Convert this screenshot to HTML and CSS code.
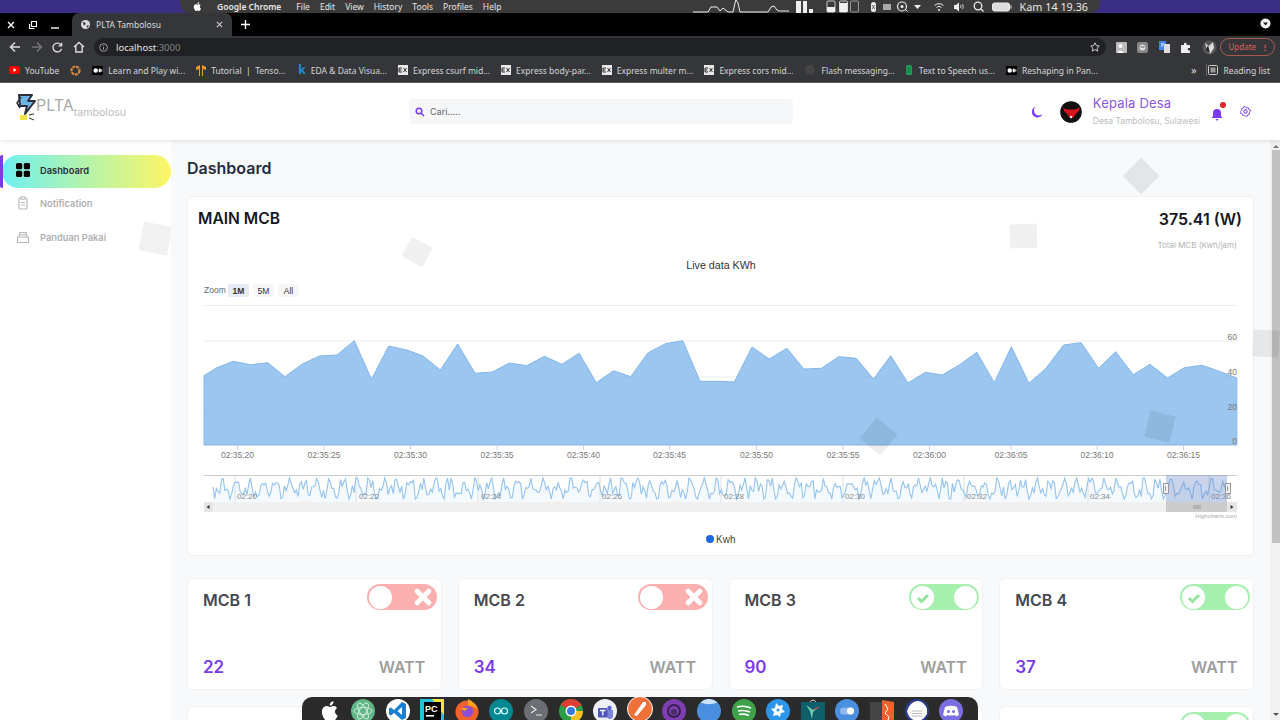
FILE: index.html
```html
<!DOCTYPE html>
<html lang="en">
<head>
    <meta charset="UTF-8">
    <title>PLTA Tambolosu</title>
    <link rel="stylesheet" href="styles.css">
</head>
<body>
    <svg class="defs" width="0" height="0">
        <symbol id="apple" viewBox="0 0 24 24"><path d="M17 12.5c0-2.4 2-3.5 2.1-3.6-1.1-1.7-2.9-1.9-3.5-1.9-1.5-.2-2.9.9-3.7.9-.8 0-2-.9-3.2-.8-1.6 0-3.2 1-4 2.4-1.7 3-.4 7.4 1.2 9.8.8 1.2 1.8 2.5 3.1 2.4 1.2 0 1.7-.8 3.2-.8s1.9.8 3.2.8c1.3 0 2.2-1.2 3-2.4.9-1.4 1.3-2.7 1.3-2.8-.1 0-2.6-1-2.7-4zM14.6 5.2c.7-.8 1.1-1.9 1-3-1 0-2.1.6-2.8 1.4-.6.7-1.2 1.9-1 2.9 1.1.1 2.1-.5 2.8-1.3z"/></symbol>
        <symbol id="ex" viewBox="0 0 10 10"><rect width="10" height="10" fill="#e8e8e8"/><path d="M1 3h3M1 5h2.500M1 7h3M1 3v4M5.500 3l3 4M8.500 3l-3 4" stroke="#333" stroke-width="1" fill="none"/></symbol>
        <symbol id="medium" viewBox="0 0 12 10"><rect width="12" height="10" fill="#000"/><circle cx="4" cy="5" r="2.500" fill="#fff"/><ellipse cx="8.500" cy="5" rx="1.300" ry="2.300" fill="#fff"/><ellipse cx="10.800" cy="5" rx=".5" ry="2" fill="#fff"/></symbol>
        <symbol id="cross" viewBox="0 0 17 17"><path d="M3 3l11 11M14 3L3 14" stroke="#fff" stroke-width="4.600" stroke-linecap="round"/></symbol>
        <symbol id="tick" viewBox="0 0 14 14"><path d="M2 7l3.500 3.500L12 4" fill="none" stroke="#93e59e" stroke-width="3"/></symbol>
    </svg>

    <!-- mac menu bar -->
    <div class="menubar">
        <div class="menubar-panel">
            <svg class="menu-apple" width="11" height="11"><use href="#apple" fill="#fff"/></svg>
            <b class="menu-app">Google Chrome</b>
            <span>File</span><span>Edit</span><span>View</span><span>History</span><span>Tools</span><span>Profiles</span><span>Help</span>
            <svg class="menu-status" width="320" height="13" viewBox="693 0 320 13">
                <polyline points="693,12 708,12 711,7 717,7 720,11 723,8 728,12 733,12 735,3 736,0 738,3 740,12 768,12 771,7 774,6 777,10 779,11 789,11" fill="none" stroke="#eee" stroke-width="1"/>
                <rect x="796" y="1" width="5" height="12" fill="#eee"/><rect x="803" y="1" width="4" height="12" fill="#eee"/><rect x="809" y="9" width="4" height="4" fill="#eee"/>
                <rect x="827" y="1" width="8" height="11" fill="none" stroke="#ccc" rx="1"/><rect x="827" y="7" width="8" height="5" fill="#eee"/>
                <rect x="839.500" y="1" width="8" height="11" fill="none" stroke="#ccc" rx="1"/><rect x="839.500" y="3" width="8" height="9" fill="#eee"/>
                <rect x="850.500" y="1" width="8" height="11" fill="none" stroke="#999" rx="1"/>
                <rect x="871" y="2" width="5" height="10" rx="2.500" fill="#eee"/><path d="M872 5l3 4M875 5l-3 4" stroke="#333" stroke-width=".7"/>
                <rect x="883" y="4" width="8" height="6" fill="#aaa"/>
                <circle cx="902" cy="6.500" r="4.500" fill="none" stroke="#eee" stroke-width="1.200"/><circle cx="902" cy="6.500" r="1.500" fill="#eee"/><path d="M905 9l2.500 2.500" stroke="#eee"/>
                <path d="M914 5h7l-3.500 4z" fill="#eee"/>
                <path d="M934.500 5.500a6.500 6.500 0 0 1 9 0M936.500 7.500a3.500 3.500 0 0 1 5 0" fill="none" stroke="#eee"/><circle cx="939" cy="10" r="1" fill="#eee"/>
                <path d="M954 5h2l3-2.500v9l-3-2.500h-2z" fill="#eee"/><path d="M960.500 5q1 1.500 0 3M962.500 4q1.500 2.500 0 5" stroke="#eee" fill="none" stroke-width=".8"/>
                <circle cx="978" cy="6" r="3.800" fill="none" stroke="#eee" stroke-width="1.300"/><path d="M981 9l2.500 2.500" stroke="#eee" stroke-width="1.300"/>
                <rect x="992.500" y="3" width="17" height="8" rx="2" fill="#ddd" stroke="#eee"/><rect x="1010.500" y="5.500" width="1" height="3" fill="#eee"/>
            </svg>
            <span class="menu-clock">Kam 14 19.36</span>
        </div>
    </div>

    <!-- browser chrome -->
    <div class="tabbar">
        <div class="win-btns">
            <svg width="8" height="8" viewBox="0 0 8 8"><path d="M1 1l6 6M7 1l-6 6" stroke="#fff" stroke-width="1.400"/></svg>
            <svg width="8" height="8" viewBox="0 0 8 8"><path d="M2.500.5h5v5h-5zM.5 3v4.500h5" fill="none" stroke="#fff" stroke-width="1.200"/></svg>
            <svg width="8" height="8" viewBox="0 0 8 8"><path d="M0 7h8" stroke="#fff" stroke-width="1.400"/></svg>
        </div>
        <div class="tab">
            <svg width="9" height="9" viewBox="0 0 10 10"><circle cx="5" cy="5" r="5" fill="#ddd"/><path d="M2 2l3 1v2l-2 1zM6 6h3l-2 3z" fill="#35363a"/></svg>
            <span class="tab-title">PLTA Tambolosu</span>
            <svg width="7" height="7" viewBox="0 0 8 8"><path d="M1 1l6 6M7 1l-6 6" stroke="#ccc" stroke-width="1.300"/></svg>
        </div>
        <svg class="new-tab" width="9" height="9" viewBox="0 0 9 9"><path d="M4.500 0v9M0 4.500h9" stroke="#fff" stroke-width="1.400"/></svg>
        <svg class="tab-menu" width="11" height="11" viewBox="0 0 11 11"><circle cx="5.500" cy="5.500" r="5" fill="#f2f2f2"/><path d="M3 4.500h5l-2.500 3z" fill="#111"/></svg>
    </div>

    <div class="toolbar">
        <svg width="12" height="12" viewBox="0 0 12 12"><path d="M11 6H2M6 1.500L1.500 6 6 10.500" fill="none" stroke="#ddd" stroke-width="1.500"/></svg>
        <svg width="12" height="12" viewBox="0 0 12 12"><path d="M1 6h9M6 1.500L10.500 6 6 10.500" fill="none" stroke="#777" stroke-width="1.500"/></svg>
        <svg width="11" height="11" viewBox="0 0 12 12"><path d="M10.500 7.500a4.800 4.800 0 1 1-.8-4.500M10.500.8v3.400H7" fill="none" stroke="#ddd" stroke-width="1.500"/></svg>
        <svg width="12" height="12" viewBox="0 0 12 12"><path d="M1 6l5-4.500L11 6M2.800 5v6h6.400V5" fill="none" stroke="#ddd" stroke-width="1.400"/></svg>
        <div class="omnibox">
            <svg width="9" height="9" viewBox="0 0 10 10"><circle cx="5" cy="5" r="4.300" fill="none" stroke="#aaa"/><path d="M5 4.500v3M5 2.500v1" stroke="#aaa"/></svg>
            <span class="url">localhost<i>:3000</i></span>
            <svg class="star" width="10" height="10" viewBox="0 0 10 10"><path d="M5 .8l1.300 2.800 3 .4-2.200 2.100.6 3L5 7.600 2.300 9.100l.6-3L.7 4l3-.4z" fill="none" stroke="#ddd" stroke-width=".9"/></svg>
        </div>
        <div class="ext-icons">
            <svg width="11" height="11" viewBox="0 0 11 11"><rect width="11" height="11" rx="1" fill="#bbb"/><circle cx="4.500" cy="4" r="2" fill="#fff"/><path d="M1 11q3-5 7 0z" fill="#fff"/></svg>
            <svg width="11" height="11" viewBox="0 0 11 11"><rect width="11" height="11" rx="2" fill="#888"/><circle cx="5.500" cy="5.500" r="3" fill="#ddd"/><path d="M3.500 5h4" stroke="#666"/></svg>
            <svg width="11" height="12" viewBox="0 0 11 12"><rect width="7" height="9" fill="#4285f4"/><rect x="5" y="3" width="6" height="9" fill="#ddd"/><path d="M2 3h3M2 5h2" stroke="#fff"/></svg>
            <svg width="11" height="11" viewBox="0 0 11 11"><path d="M1 3h3V2a1.300 1.300 0 0 1 2.600 0v1H10v3H9a1.300 1.300 0 0 0 0 2.600h1V11H1z" fill="#eee"/></svg>
            <svg width="15" height="15" viewBox="0 0 15 15"><circle cx="7.500" cy="7.500" r="7" fill="#555"/><path d="M3 3l4 3 4-4 1 6-4 6-3-4z" fill="#ddd"/><path d="M6 5l2 8-4-3z" fill="#222"/></svg>
        </div>
        <div class="update-btn">Update <i>⋮</i></div>
    </div>

    <div class="bookmarks">
        <span class="bm"><svg width="11" height="8" viewBox="0 0 11 8"><rect width="11" height="8" rx="2" fill="#f00"/><path d="M4.500 2l3 2-3 2z" fill="#fff"/></svg>YouTube</span>
        <span class="bm"><svg width="11" height="11" viewBox="0 0 11 11"><circle cx="5.500" cy="5.500" r="4" fill="none" stroke="#d98a3a" stroke-width="2.200" stroke-dasharray="3 .8"/></svg></span>
        <span class="bm"><svg width="11" height="9"><use href="#medium"/></svg>Learn and Play wi...</span>
        <span class="bm"><svg width="10" height="11" viewBox="0 0 10 11"><path d="M0 2l4-2v11H3V4L0 5zM10 2L6 0v11h1V4l3 1z" fill="#f59a23"/></svg>Tutorial &nbsp;|&nbsp; Tenso...</span>
        <span class="bm"><b class="k-icon">k</b>EDA &amp; Data Visua...</span>
        <span class="bm"><svg width="10" height="10"><use href="#ex"/></svg>Express csurf mid...</span>
        <span class="bm"><svg width="10" height="10"><use href="#ex"/></svg>Express body-par...</span>
        <span class="bm"><svg width="10" height="10"><use href="#ex"/></svg>Express multer m...</span>
        <span class="bm"><svg width="10" height="10"><use href="#ex"/></svg>Express cors mid...</span>
        <span class="bm bm-wide"><svg width="10" height="10" viewBox="0 0 10 10"><circle cx="5" cy="5" r="5" fill="#444"/></svg>Flash messaging...</span>
        <span class="bm bm-wide"><svg width="6" height="10" viewBox="0 0 6 10"><rect width="6" height="10" rx="1.500" fill="#1e9e5a"/><path d="M1 3h4M1 5h4M1 7h4" stroke="#0c5f34" stroke-width=".6"/></svg>Text to Speech us...</span>
        <span class="bm"><svg width="11" height="9"><use href="#medium"/></svg>Reshaping in Pan...</span>
        <span class="bm-more">»</span>
        <span class="bm-reading"><svg width="10" height="10" viewBox="0 0 10 10"><rect x=".5" y=".5" width="9" height="9" rx="1" fill="none" stroke="#ccc"/><rect x="2.500" y="2.500" width="5" height="5" fill="#999"/></svg>Reading list</span>
    </div>

    <!-- page -->
    <header class="topbar">
        <div class="brand">
            <svg width="20" height="27" viewBox="0 0 20 27">
                <path d="M3 1h13l-4 6 7 0-10 13 2-8H4z" fill="#6db5e6" stroke="#2b2f38" stroke-width="2" stroke-linejoin="round"/>
                <path d="M5 3l-4 6 3 5" fill="none" stroke="#2b2f38" stroke-width="1.500"/>
                <rect x="4" y="21" width="7" height="5" fill="#f2e63a"/>
                <path d="M13 21l5-1M13 24l5 2" stroke="#333"/>
            </svg>
            <span class="brand-name">PLTA</span><span class="brand-sub">tambolosu</span>
        </div>
        <div class="search">
            <svg width="10" height="10" viewBox="0 0 10 10"><circle cx="4" cy="4" r="2.800" fill="none" stroke="#7c3aed" stroke-width="1.500"/><path d="M6.200 6.200L9 9" stroke="#7c3aed" stroke-width="1.500"/></svg>
            <span>Cari.....</span>
        </div>
        <div class="user">
            <svg class="moon" width="12" height="12" viewBox="0 0 12 12"><path d="M4.500.8a5.500 5.500 0 1 0 7 7.200A5 5 0 0 1 4.500.8z" fill="#7c3aed"/></svg>
            <svg class="avatar" width="22" height="22" viewBox="0 0 22 22"><circle cx="11" cy="11" r="10.800" fill="#111"/><path d="M2.500 5.500Q4 8.500 8 8.500h6q4 0 5.500-3 .5 5-3.500 7l-2 3.500-2.500 1.500-2.500-1.500-2-3.500q-4-2-3.500-7z" fill="#d8151f"/><circle cx="11" cy="16" r="1.200" fill="#eee"/></svg>
            <div class="user-info">
                <div class="user-name">Kepala Desa</div>
                <div class="user-place">Desa Tambolosu, Sulawesi</div>
            </div>
            <span class="bell">
                <svg width="12" height="13" viewBox="0 0 12 13"><path d="M6 1a4 4 0 0 0-4 4v3L.8 10h10.400L10 8V5a4 4 0 0 0-4-4zM4.500 11h3L6 13z" fill="#7c3aed"/></svg>
                <i class="bell-dot"></i>
            </span>
            <svg class="gear" width="11" height="11" viewBox="0 0 12 12"><circle cx="6" cy="6" r="1.800" fill="none" stroke="#7c3aed" stroke-width="1.100"/><path d="M6 .8l1.200 1.400 1.800-.3.600 1.700 1.700.6-.3 1.800L11.200 6 10 7.200l.3 1.800-1.700.6-.6 1.700-1.800-.3L6 11.200 4.800 10l-1.800.3-.6-1.700-1.700-.6.3-1.800L.8 6 2 4.800 1.700 3l1.700-.6L4 .7l1.800.3z" fill="none" stroke="#7c3aed" stroke-width="1"/></svg>
        </div>
    </header>

    <div class="layout">
        <aside class="sidebar">
            <i class="deco deco-side"></i>
            <a class="nav-item active">
                <svg width="14" height="14" viewBox="0 0 14 14"><rect width="6.200" height="6.200" rx="1.500"/><rect x="7.800" width="6.200" height="6.200" rx="1.500"/><rect y="7.800" width="6.200" height="6.200" rx="1.500"/><rect x="7.800" y="7.800" width="6.200" height="6.200" rx="1.500"/></svg>
                Dashboard
            </a>
            <a class="nav-item">
                <svg width="14" height="14" viewBox="0 0 14 14" fill="none" stroke="#b5b5b5" stroke-width="1.100"><rect x="3" y="2" width="8" height="11" rx="1.500"/><rect x="5" y=".8" width="4" height="2.400" rx=".8" fill="#fff"/><path d="M5 6.500h4M5 9h4"/></svg>
                Notification
            </a>
            <a class="nav-item">
                <svg width="14" height="14" viewBox="0 0 14 14" fill="none" stroke="#b5b5b5" stroke-width="1.100"><path d="M1.500 7h11v5.500h-11zM3 7l1-4.500h6L11 7"/><path d="M3.500 4.800h7"/></svg>
                Panduan Pakai
            </a>
        </aside>

        <main class="main">
            <i class="deco deco-1"></i>
            <i class="deco deco-2"></i>
            <i class="deco deco-3"></i>
            <i class="deco deco-4"></i>
            <i class="deco deco-5"></i>
            <i class="deco deco-6"></i>

            <div class="content">
                <h1 class="page-title">Dashboard</h1>

                <section class="chart-card">
                    <div class="chart-head">
                        <h2 class="main-mcb">MAIN MCB</h2>
                        <h2>375.41 (W)</h2>
                    </div>
                    <div class="chart-sub">Total MCB (Kwh/jam)</div>

                    <svg class="chart" width="1065" height="299" viewBox="188 256 1065 299">
                        <text class="c-title" x="721" y="269" text-anchor="middle">Live data KWh</text>

                        <text class="c-zoom" x="204" y="293">Zoom</text>
                        <rect x="228" y="284" width="21" height="13" rx="2" fill="#e6ebf5"/>
                        <text class="c-btn c-btn-on" x="238.500" y="293.500" text-anchor="middle">1M</text>
                        <rect x="253" y="284" width="21" height="13" rx="2" fill="#f7f7f7"/>
                        <text class="c-btn" x="263.500" y="293.500" text-anchor="middle">5M</text>
                        <rect x="278" y="284" width="21" height="13" rx="2" fill="#f7f7f7"/>
                        <text class="c-btn" x="288.500" y="293.500" text-anchor="middle">All</text>

                        <path class="c-grid" d="M204 305.500H1237M204 341H1237M204 377H1237M204 411H1237"/>

                        <polygon class="c-area" points="204,445 204,375.700 216.900,367.700 233,361.300 250.600,364.700 267.800,362.700 285,376.700 302.300,364 319.500,356 337,355 354.300,340.700 371.500,379.300 388.700,346 406.900,350 423.100,356 440.300,370 457.600,344 475.100,373.300 492.300,372 509.600,363 526.800,365.700 544.300,356.300 561.900,364.300 579.100,353.300 596.300,382.700 613.600,370.700 630.800,376.700 648,352.700 665.600,343.700 682.800,340.700 700,381.300 720,381.300 734.300,382 752.100,347 769.300,359 786.800,348.300 803.900,369 821.400,368.300 838.600,356.700 856.100,358.300 873.600,379 890.700,355.700 907.900,383 925.400,372.300 942.100,375 959.300,365 976.800,352.300 994.300,382.700 1011.400,346.700 1028.900,383.300 1046,368.300 1063.600,345 1081.100,342.700 1098.600,368.300 1115.700,351.700 1133.200,374.700 1150,364.300 1167.500,378 1184.300,367.700 1202.100,365.300 1219.300,371.300 1236.800,378 1236.800,445"/>
                        <path class="c-axis" d="M204 445.500H1237M237.500 445v5M324 445v5M410.500 445v5M497 445v5M583.500 445v5M669.500 445v5M756.500 445v5M843 445v5M929.500 445v5M1011 445v5M1097 445v5M1183.500 445v5"/>

                        <g class="c-label" text-anchor="middle">
                            <text x="237.500" y="458">02:35:20</text>
                            <text x="324" y="458">02:35:25</text>
                            <text x="410.500" y="458">02:35:30</text>
                            <text x="497" y="458">02:35:35</text>
                            <text x="583.500" y="458">02:35:40</text>
                            <text x="669.500" y="458">02:35:45</text>
                            <text x="756.500" y="458">02:35:50</text>
                            <text x="843" y="458">02:35:55</text>
                            <text x="929.500" y="458">02:36:00</text>
                            <text x="1011" y="458">02:36:05</text>
                            <text x="1097" y="458">02:36:10</text>
                            <text x="1183.500" y="458">02:36:15</text>
                        </g>
                        <g class="c-label" text-anchor="end">
                            <text x="1237" y="340">60</text>
                            <text x="1237" y="375">40</text>
                            <text x="1237" y="410">20</text>
                            <text x="1237" y="444">0</text>
                        </g>

                        <!-- navigator -->
                        <path class="c-nav-top" d="M204 475.500H1237"/>
                        <polygon id="navArea" fill="#f4f9fe"/>
                        <path class="c-nav-ticks" d="M235 476v26M356 476v26M478 476v26M600 476v26M721 476v26M843 476v26M964 476v26M1088 476v26M1209 476v26"/>
                        <polyline id="navLine" fill="none" stroke="#93c3f0" stroke-width="1.100"/>
                        <g class="c-nav-label">
                            <text x="237" y="499">02:20</text>
                            <text x="359" y="499">02:22</text>
                            <text x="481" y="499">02:24</text>
                            <text x="602" y="499">02:26</text>
                            <text x="724" y="499">02:28</text>
                            <text x="845" y="499">02:30</text>
                            <text x="967" y="499">02:32</text>
                            <text x="1090" y="499">02:34</text>
                            <text x="1211" y="499">02:36</text>
                        </g>
                        <rect x="1166" y="475" width="61" height="27" fill="#6685c2" fill-opacity=".35"/>
                        <rect x="204" y="502" width="1033" height="10" fill="#f0f0f0"/>
                        <rect x="204" y="502" width="9" height="10" fill="#e6e6e6"/>
                        <path d="M209.500 505v4l-3-2z" fill="#333"/>
                        <rect x="1166" y="502" width="61" height="10" fill="#cccccc"/>
                        <path d="M1194 505v4M1196 505v4M1198 505v4M1200 505v4" stroke="#999"/>
                        <rect x="1227" y="502" width="10" height="10" fill="#e6e6e6"/>
                        <path d="M1230.500 505v4l3-2z" fill="#333"/>
                        <g fill="#f2f2f2" stroke="#999">
                            <rect x="1163.500" y="483.500" width="5" height="10"/>
                            <rect x="1225.500" y="483.500" width="5" height="10"/>
                        </g>
                        <path d="M1165.500 486v5M1227.500 486v5" stroke="#999"/>
                        <text class="c-credit" x="1237" y="518" text-anchor="end">Highcharts.com</text>

                        <circle cx="710" cy="539" r="4" fill="#1f66e0"/>
                        <text class="c-legend" x="716" y="542.500">Kwh</text>
                    </svg>
                </section>

                <section class="mcb-grid">
                    <div class="mcb-card">
                        <div class="mcb-top"><h3>MCB 1</h3><span class="toggle off"><i class="knob"></i><svg width="18" height="18"><use href="#cross"/></svg></span></div>
                        <div class="mcb-bottom"><b>22</b><span>WATT</span></div>
                    </div>
                    <div class="mcb-card">
                        <div class="mcb-top"><h3>MCB 2</h3><span class="toggle off"><i class="knob"></i><svg width="18" height="18"><use href="#cross"/></svg></span></div>
                        <div class="mcb-bottom"><b>34</b><span>WATT</span></div>
                    </div>
                    <div class="mcb-card">
                        <div class="mcb-top"><h3>MCB 3</h3><span class="toggle on"><i class="check"><svg width="14" height="14"><use href="#tick"/></svg></i><i class="knob"></i></span></div>
                        <div class="mcb-bottom"><b>90</b><span>WATT</span></div>
                    </div>
                    <div class="mcb-card">
                        <div class="mcb-top"><h3>MCB 4</h3><span class="toggle on"><i class="check"><svg width="14" height="14"><use href="#tick"/></svg></i><i class="knob"></i></span></div>
                        <div class="mcb-bottom"><b>37</b><span>WATT</span></div>
                    </div>
                    <div class="mcb-card"></div>
                    <div class="mcb-card"></div>
                    <div class="mcb-card"></div>
                    <div class="mcb-card">
                        <div class="mcb-top mcb-top-end"><span class="toggle on"><i class="check"><svg width="14" height="14"><use href="#tick"/></svg></i><i class="knob"></i></span></div>
                    </div>
                </section>
            </div>

            <div class="scrollbar">
                <i class="arrow-up"></i>
                <i class="thumb"></i>
                <i class="arrow-down"></i>
            </div>
        </main>
    </div>

    <!-- dock -->
    <div class="dock">
        <svg class="dock-apple" width="24" height="24"><use href="#apple" fill="#fff"/></svg>
        <svg width="24" height="24" viewBox="0 0 24 24"><circle cx="12" cy="12" r="12" fill="#62b587"/><g fill="none" stroke="#d6f0df" stroke-width=".9"><ellipse cx="12" cy="12" rx="9" ry="3.500"/><ellipse cx="12" cy="12" rx="9" ry="3.500" transform="rotate(60 12 12)"/><ellipse cx="12" cy="12" rx="9" ry="3.500" transform="rotate(120 12 12)"/></g></svg>
        <svg width="24" height="24" viewBox="0 0 24 24"><circle cx="12" cy="12" r="12" fill="#fff"/><path d="M16 3l4 2v14l-4 2-8-7-3 2.500-2-1V9.500l2-1L8 11z" fill="#1b7fd1"/><path d="M16 8l-4.500 4 4.500 4z" fill="#fff"/></svg>
        <svg width="24" height="24" viewBox="0 0 24 24"><rect width="24" height="24" fill="#21c4d8"/><path d="M12 0h12v16z" fill="#f5e642"/><rect x="4" y="3" width="17" height="19" fill="#000"/><text class="dock-pc" x="5" y="13">PC</text><rect x="6" y="16" width="8" height="1.600" fill="#fff"/></svg>
        <svg width="24" height="24" viewBox="0 0 24 24"><circle cx="12" cy="13" r="11.500" fill="#f0622d"/><path d="M13 0q7 3 10 11-5-5-10-4z" fill="#f9a21b"/><circle cx="12.500" cy="12.500" r="5.800" fill="#8b4fd8"/><path d="M5 9h8l-3 3z" fill="#f9a21b"/></svg>
        <svg width="24" height="24" viewBox="0 0 24 24"><circle cx="12" cy="12" r="12" fill="#00878f"/><circle cx="8.500" cy="12" r="3" fill="none" stroke="#dff" stroke-width="1.200"/><circle cx="15.500" cy="12" r="3" fill="none" stroke="#dff" stroke-width="1.200"/></svg>
        <svg width="24" height="24" viewBox="0 0 24 24"><circle cx="12" cy="12" r="12" fill="#6b6e72"/><path d="M7 7l5 3.500L7 14M12 16h6" fill="none" stroke="#e5e5e5" stroke-width="1.200"/></svg>
        <svg width="24" height="24" viewBox="0 0 24 24"><circle cx="12" cy="12" r="12" fill="#2d9c48"/><path d="M12 12L1.600 6A12 12 0 0 1 22.400 6z" fill="#dd3f33"/><path d="M12 12h12A12 12 0 0 1 12 24z" fill="#f6c025"/><circle cx="12" cy="12" r="5.500" fill="#fff"/><circle cx="12" cy="12" r="4" fill="#3a78e0"/></svg>
        <svg width="24" height="24" viewBox="0 0 24 24"><circle cx="12" cy="12" r="12" fill="#eef0f8"/><circle cx="16.500" cy="9" r="2.200" fill="#5a62c4"/><path d="M13 11h7v6a3 3 0 0 1-6 0z" fill="#7b83dc"/><rect x="5" y="9" width="9.500" height="9.500" rx="1" fill="#4d55b8"/><path d="M7 11.500h5.500M9.800 11.500v5" stroke="#fff" stroke-width="1.300"/></svg>
        <svg class="dock-big" width="26" height="26" viewBox="0 0 26 26"><circle cx="13" cy="13" r="12.500" fill="#f0703a" stroke="#fff" stroke-width="1"/><path d="M7 19l3 1 9-11 0-3-3 0z" fill="#fff"/></svg>
        <svg width="24" height="24" viewBox="0 0 24 24"><circle cx="12" cy="12" r="12" fill="#7d3fb0"/><circle cx="12" cy="12" r="6" fill="none" stroke="#36204f" stroke-width="2"/><circle cx="12" cy="13" r="3" fill="#4a2a69"/></svg>
        <svg width="24" height="24" viewBox="0 0 24 24"><circle cx="12" cy="12" r="12" fill="#4a8ee0"/><path d="M3.500 3.500a12 12 0 0 1 17 0q-8.500 3.500-17 0z" fill="#c9e3fb"/></svg>
        <svg width="24" height="24" viewBox="0 0 24 24"><circle cx="12" cy="12" r="12" fill="#3fa14a"/><path d="M5 8q7-2 14 1M6 12q6-1.500 12 1M7 15.500q5-1 10 1" fill="none" stroke="#fff" stroke-width="1.600"/></svg>
        <svg width="24" height="24" viewBox="0 0 24 24"><circle cx="12" cy="12" r="12" fill="#2d96e8"/><path d="M10 4l3 3 4-1-1 4 3 3-4 1-1 4-3-2-4 1 1-4-3-3 4-1z" fill="#fff"/><circle cx="12" cy="11" r="1.500" fill="#2d96e8"/></svg>
        <svg width="24" height="26" viewBox="0 0 24 26"><path d="M8 4q4-6 8 0" fill="none" stroke="#ccc"/><rect y="3" width="24" height="23" fill="#0f5f6a"/><path d="M5 6l7 5 6-3-6 5-1 7-2-8z" fill="#6fd0b0"/><path d="M12 11l6-3" stroke="#e04050"/></svg>
        <svg width="24" height="24" viewBox="0 0 24 24"><circle cx="12" cy="12" r="12" fill="#4a8ee0"/><rect x="5" y="8.500" width="14" height="7" rx="3.500" fill="#8fb8ec"/><circle cx="15.500" cy="12" r="3.500" fill="#fff"/></svg>
        <svg width="24" height="26" viewBox="0 0 24 26"><path d="M0 3l12 0V26H0z" fill="#454545"/><path d="M12 1l12 2V26H12z" fill="#f0622d"/><path d="M15 5l3 5-3 4 4 4-2 6" fill="none" stroke="#fff" stroke-width="1"/></svg>
        <svg width="24" height="24" viewBox="0 0 24 24"><circle cx="12" cy="12" r="12" fill="#2c3d8f"/><path d="M12 2q7 0 10 8v5q-4 7-10 7-8-1-10-10 3-9 10-10z" fill="#fff"/><path d="M7 12h10M7 14.500h10M7 17h10" stroke="#bbb"/></svg>
        <svg width="24" height="24" viewBox="0 0 24 24"><circle cx="12" cy="12" r="12" fill="#7a6ee0"/><path d="M6 8q6-2.500 12 0l2 8-3 1.500-1-1.500q-4 1-8 0l-1 1.500L4 16z" fill="#fff"/><circle cx="9.500" cy="12.500" r="1.500" fill="#7a6ee0"/><circle cx="14.500" cy="12.500" r="1.500" fill="#7a6ee0"/></svg>
    </div>

    <script src="script.js"></script>
</body>
</html>
```

FILE: styles.css
```css
* {
    box-sizing: border-box;
}

body {
    margin: 0;
    width: 1280px;
    height: 720px;
    overflow: hidden;
    position: relative;
    display: flex;
    flex-direction: column;
    font-family: Inter, "Liberation Sans", sans-serif;
    background: #f8f9fb;
}

i {
    font-style: normal;
}

.defs {
    position: absolute;
}

/* mac menu bar */
.menubar {
    height: 13px;
    background: #3b2e85;
    padding: 0 180px;
    flex: none;
}

.menubar-panel {
    height: 13px;
    background: #3b3b3b;
    border-radius: 0 0 9px 9px;
    display: flex;
    align-items: center;
    gap: 10px;
    color: #e6e6e6;
    font-family: "Noto Sans", sans-serif;
    font-size: 8.5px;
    white-space: nowrap;
}

.menu-apple {
    margin-left: 12px;
}

.menu-app {
    margin: 0 5px 0 4px;
    font-weight: 600;
}

.menu-status {
    position: absolute;
    left: 693px;
    top: 0;
}

.menu-clock {
    margin-left: auto;
    margin-right: 12px;
    font-size: 10.800px;
}

/* browser chrome */
.tabbar {
    height: 23px;
    background: #000;
    display: flex;
    align-items: flex-end;
    flex: none;
}

.win-btns {
    width: 72px;
    height: 23px;
    padding: 0 13px 0 7px;
    display: flex;
    align-items: center;
    justify-content: space-between;
}

.tab {
    width: 160px;
    height: 23px;
    background: #35363a;
    border-radius: 7px 7px 0 0;
    display: flex;
    align-items: center;
    padding: 0 9px;
    gap: 6px;
    color: #ddd;
    font: 8.5px "Noto Sans", sans-serif;
}

.tab-title {
    flex: 1;
}

.new-tab {
    margin: 0 0 7px 9px;
}

.tab-menu {
    margin: 0 9px 7px auto;
}

.toolbar {
    height: 22px;
    background: #35363a;
    display: flex;
    align-items: center;
    gap: 9.500px;
    padding: 0 6px 0 9px;
    flex: none;
}

.toolbar svg {
    flex: none;
}

.omnibox {
    flex: none;
    width: 1012px;
    height: 18px;
    background: #202124;
    border-radius: 9px;
    display: flex;
    align-items: center;
    padding: 0 6px 0 5px;
    gap: 8px;
    font: 9.500px "Noto Sans", sans-serif;
    color: #e3e3e3;
}

.url i {
    color: #858585;
}

.star {
    margin-left: auto;
}

.ext-icons {
    display: flex;
    align-items: center;
    gap: 10.500px;
    flex: none;
}

.update-btn {
    flex: none;
    height: 18px;
    width: 55px;
    margin-left: -6.500px;
    border: 1px solid #a85a52;
    border-radius: 9px;
    color: #d9655a;
    font: 8px/16px "Noto Sans", sans-serif;
    padding-left: 8px;
    display: flex;
    justify-content: space-between;
    padding-right: 5px;
}

.update-btn i {
    font-weight: bold;
}

.bookmarks {
    height: 25px;
    background: #35363a;
    border-bottom: 1px solid #5c5d60;
    display: flex;
    align-items: center;
    padding: 0 10px 0 9px;
    gap: 11px;
    color: #d6d6d6;
    font: 8.5px "Noto Sans", sans-serif;
    white-space: nowrap;
    flex: none;
}

.bm {
    display: flex;
    align-items: center;
    gap: 5px;
}

.bm-wide {
    gap: 7px;
}

.k-icon {
    color: #1d8fd8;
    font-size: 12px;
    line-height: 10px;
    padding-left: 2px;
}

.bm-more {
    margin-left: auto;
    color: #ddd;
    font-size: 11px;
    line-height: 12px;
    padding-right: 9px;
    border-right: 1px solid #666;
}

.bm-reading {
    display: flex;
    align-items: center;
    gap: 6px;
    margin-left: -10px;
}

/* page header */
.topbar {
    height: 57px;
    background: #fff;
    box-shadow: 0 1px 5px rgba(0, 0, 0, 0.12);
    position: relative;
    z-index: 2;
    display: flex;
    align-items: center;
    padding: 0 29px 0 16px;
    flex: none;
}

.brand {
    width: 393px;
    display: flex;
    align-items: center;
    align-self: flex-start;
    padding-top: 11px;
}

.brand-name {
    font-size: 16px;
    line-height: 22px;
    align-self: flex-start;
    color: #a9a9a9;
}

.brand-sub {
    font-size: 10.600px;
    color: #bbb;
    align-self: flex-start;
    margin-top: 12px;
}

.search {
    width: 384px;
    height: 25px;
    background: #f5f6f8;
    border-radius: 4px;
    display: flex;
    align-items: center;
    gap: 5px;
    padding-left: 6px;
    font-size: 9px;
    color: #666;
}

.user {
    margin-left: auto;
    display: flex;
    align-items: center;
}

.moon {
    margin-right: 17px;
}

.avatar {
    margin-right: 11px;
}

.user-name {
    font-size: 13px;
    line-height: 16px;
    color: #8a56e2;
    letter-spacing: 0.2px;
    margin-top: -2px;
}

.user-place {
    font-size: 8.500px;
    line-height: 11px;
    color: #bdbdbd;
    margin-top: 5px;
    white-space: nowrap;
}

.bell {
    position: relative;
    display: block;
    height: 13px;
    margin: 0 17px 0 11px;
}

.bell-dot {
    position: absolute;
    top: -3px;
    right: -3px;
    width: 6px;
    height: 6px;
    border-radius: 50%;
    background: #e0242c;
}

/* main layout */
.layout {
    flex: 1;
    display: flex;
    min-height: 0;
}

.sidebar {
    width: 171px;
    flex: none;
    background: #fff;
    position: relative;
    overflow: hidden;
    padding-top: 15px;
}

.nav-item {
    display: flex;
    align-items: center;
    gap: 10px;
    height: 34px;
    padding-left: 16px;
    font-size: 9.300px;
    font-weight: 600;
    color: #b0b0b0;
    position: relative;
}

.nav-item.active {
    height: 33px;
    margin: 0 0 -2px 2px;
    padding: 0 0 3px 14px;
    border-radius: 17px;
    background: linear-gradient(90deg, #6ef0f0, #fdf565);
    color: #2a2f3b;
}

.nav-item.active::before {
    content: "";
    position: absolute;
    left: -2px;
    top: 0;
    width: 3px;
    height: 33px;
    background: #7c3aed;
    border-radius: 2px 0 0 2px;
}

.main {
    flex: 1;
    display: flex;
    position: relative;
    min-width: 0;
    overflow: hidden;
}

.content {
    flex: 1;
    padding: 18px 16px 0;
    min-width: 0;
}

.page-title {
    margin: 0 0 18px;
    font-size: 16px;
    line-height: 20px;
    font-weight: 600;
    color: #252b3b;
}

/* floating squares */
.deco {
    position: absolute;
    display: block;
    background: rgba(0, 0, 0, 0.07);
    z-index: 1;
}

.deco-side {
    left: 141px;
    top: 84px;
    width: 29px;
    height: 29px;
    transform: rotate(11deg);
    background: #f1f1f1;
}

.deco-1 {
    left: 957px;
    top: 23px;
    width: 26px;
    height: 26px;
    transform: rotate(45deg);
    background: rgba(0, 0, 0, 0.08);
}

.deco-2 {
    left: 839px;
    top: 84px;
    width: 27px;
    height: 24px;
    transform: rotate(-2deg);
    background: rgba(0, 0, 0, 0.06);
}

.deco-3 {
    left: 234px;
    top: 101px;
    width: 24px;
    height: 22px;
    transform: rotate(28deg);
    background: rgba(0, 0, 0, 0.06);
}

.deco-4 {
    left: 694px;
    top: 283px;
    width: 27px;
    height: 27px;
    transform: rotate(40deg);
}

.deco-5 {
    left: 976px;
    top: 273px;
    width: 26px;
    height: 27px;
    transform: rotate(14deg);
}

.deco-6 {
    left: 1082px;
    top: 190px;
    width: 26px;
    height: 27px;
    transform: rotate(3deg);
}

/* live chart card */
.chart-card {
    height: 360px;
    background: #fff;
    border: 1px solid #f0f1f3;
    border-radius: 6px;
    display: flex;
    flex-direction: column;
}

.chart-head {
    display: flex;
    justify-content: space-between;
    padding: 12px 11px 0 10px;
}

.chart-head h2 {
    margin: 0;
    font-size: 16px;
    line-height: 20px;
    font-weight: 600;
    color: #14171f;
}

.chart-head .main-mcb {
    font-size: 15.600px;
}

.chart-sub {
    text-align: right;
    padding-right: 16px;
    margin-top: 11px;
    font-size: 8px;
    line-height: 11px;
    color: #b4b4b4;
}

.chart {
    display: block;
    margin-top: auto;
    font-family: "Liberation Sans", sans-serif;
}

.c-title {
    font-size: 10.700px;
    fill: #333;
}

.c-zoom {
    font-size: 8.500px;
    fill: #666;
}

.c-btn {
    font-size: 8.500px;
    fill: #333;
}

.c-btn-on {
    font-weight: bold;
}

.c-grid {
    stroke: #ededed;
    fill: none;
}

.c-area {
    fill: #7cb5ec;
    fill-opacity: 0.77;
    stroke: #84b6ea;
    stroke-width: 1;
}

.c-axis {
    stroke: #ccd6eb;
    fill: none;
}

.c-label text {
    font-size: 8.500px;
    fill: #777;
}

.c-nav-top {
    stroke: #ccc;
    fill: none;
}

.c-nav-ticks {
    stroke: #e0e0e0;
    fill: none;
}

.c-nav-label text {
    font-size: 8px;
    fill: #888;
}

.c-credit {
    font-size: 6px;
    fill: #aaa;
}

.c-legend {
    font-size: 10px;
    fill: #444;
}

/* mcb cards */
.mcb-grid {
    display: grid;
    grid-template-columns: repeat(4, 1fr);
    gap: 16px;
    margin-top: 22px;
}

.mcb-card {
    height: 112px;
    background: #fff;
    border: 1px solid #f0f1f3;
    border-radius: 6px;
    padding: 5px 3.500px 0 15px;
    display: flex;
    flex-direction: column;
}

.mcb-top {
    display: flex;
    justify-content: space-between;
    align-items: flex-start;
}

.mcb-top-end {
    justify-content: flex-end;
}

.mcb-top h3 {
    margin: 6px 0 0;
    font-size: 16px;
    line-height: 20px;
    font-weight: 600;
    color: #45484f;
}

.mcb-bottom {
    margin-top: auto;
    padding: 0 12px 12px 0;
    display: flex;
    justify-content: space-between;
    align-items: center;
    line-height: 20px;
}

.mcb-bottom b {
    font-size: 17px;
    font-weight: 600;
    color: #7c3aed;
}

.mcb-bottom span {
    font-size: 16px;
    font-weight: 600;
    color: #9e9e9e;
}

.toggle {
    width: 70px;
    height: 26px;
    border-radius: 13px;
    display: flex;
    align-items: center;
    justify-content: space-between;
    padding: 0 2px;
}

.toggle.off {
    background: #fcafaf;
    padding-right: 5px;
}

.toggle.on {
    background: #a6efaf;
}

.knob,
.check {
    display: block;
    width: 23px;
    height: 23px;
    border-radius: 50%;
    background: #fff;
}

.check {
    padding: 5px 0 0 5px;
    line-height: 0;
}

/* fake scrollbar */
.scrollbar {
    width: 10px;
    flex: none;
    background: #f1f1f1;
    position: relative;
    display: flex;
    flex-direction: column;
    align-items: center;
    padding: 5px 0 0 1px;
}

.arrow-up {
    border: 3px solid transparent;
    border-top: 0;
    border-bottom: 3px solid #777;
}

.thumb {
    width: 8px;
    height: 393px;
    margin-top: 2px;
    background: #c1c1c1;
}

.arrow-down {
    margin-top: auto;
    margin-bottom: 4px;
    border: 3px solid transparent;
    border-bottom: 0;
    border-top: 3px solid #555;
}

/* dock */
.dock {
    position: absolute;
    left: 302px;
    top: 697px;
    width: 676px;
    height: 23px;
    background: #2b2b2b;
    border-radius: 10px 10px 0 0;
    display: flex;
    align-items: flex-start;
    gap: 10.600px;
    padding: 2px 0 0 14.500px;
    overflow: hidden;
    z-index: 3;
}

.dock svg {
    flex: none;
}

.dock-apple {
    margin: 0 -1.500px 0 1.500px;
}

.dock-big {
    margin: -3px -1px 0;
}

.dock-pc {
    font: bold 9px "Liberation Sans", sans-serif;
    fill: #fff;
}
```

FILE: script.js
```js
// overview line under the chart, fake history data
var seed = 7;
function rnd() {
    seed = (seed * 16807) % 2147483647;
    return seed / 2147483647;
}

var pts = [];
for (var x = 213; x <= 1227; x += 1.7) {
    var i = (x - 213) / 1.7;
    var y = 488 + 7 * Math.sin(i * 0.8) + 4.5 * Math.sin(i * 1.9 + 1) + (rnd() - 0.5) * 10;
    y = Math.max(478, Math.min(499, y));
    pts.push(x.toFixed(1) + ',' + y.toFixed(1));
}

document.getElementById('navLine').setAttribute('points', pts.join(' '));
document.getElementById('navArea').setAttribute('points', '213,502 ' + pts.join(' ') + ' 1227,502');
```
